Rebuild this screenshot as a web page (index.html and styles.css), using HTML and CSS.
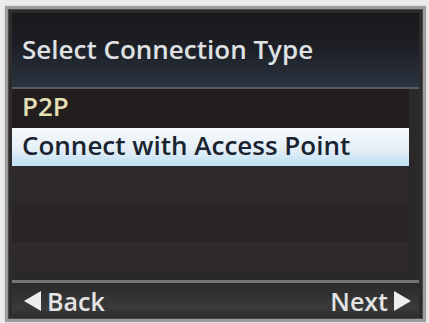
FILE: index.html
```html
<!DOCTYPE html>
<html>
<head>
<meta charset="utf-8">
<link rel="stylesheet" href="styles.css">
</head>
<body>
<div class="frame">
  <div class="screen">
    <div class="title">Select Connection Type</div>
    <div class="list">
      <div class="row p2p">P2P</div>
      <div class="row sel">Connect with Access Point</div>
      <div class="row empty"></div>
      <div class="row empty alt"></div>
      <div class="row empty"></div>
    </div>
    <div class="footer">
      <div class="btn"><span class="tri left"></span>Back</div>
      <div class="btn">Next<span class="tri right"></span></div>
    </div>
  </div>
</div>
</body>
</html>
```
FILE: styles.css
```css
html, body { margin: 0; padding: 0; background: #ececec; }
body { width: 429px; height: 323px; overflow: hidden; padding: 6px 3px 1px 5px; box-sizing: border-box; }
.frame {
  width: 421px; height: 316px; box-sizing: border-box;
  border: 3px solid #9c9c9c;
  box-shadow: inset 0 0 0 1px #4a4a4a, 0 0 2px #c8c8c8;
  padding: 4px 4px 1px 4px;
  background: #2e2b2c;
  font-family: "Open Sans", "Noto Sans", sans-serif;
  font-weight: 600;
}
.screen { display: flex; flex-direction: column; height: 100%; }
.title {
  height: 77px; box-sizing: border-box;
  padding: 21px 0 0 10px;
  font-size: 26px; line-height: 30px; color: #dfe0e2;
  background: linear-gradient(180deg, #18181b 0%, #1e2027 50%, #2b3441 100%);
  border-bottom: 2px solid #5c5c5e;
}
.list { display: flex; flex-direction: column; padding-right: 10px; background: #2b2829; }
.row { height: 38px; box-sizing: border-box; padding: 1px 0 0 10px; font-size: 26px; line-height: 32px; }
.p2p { height: 39px; color: #e2dfb4; background: #221e1e; }
.sel {
  color: #1a2430;
  background: linear-gradient(180deg, #f7fafc 0%, #e4eff6 55%, #bfe0f4 100%);
}
.empty { background: linear-gradient(180deg, #2f2b2c, #2b2829); }
.empty.alt { background: linear-gradient(180deg, #2a2627, #282425); }
.footer {
  margin-top: auto;
  height: 38px; box-sizing: border-box;
  border-top: 3px solid #757575;
  background: linear-gradient(180deg, #2a2a2a, #3a3a3a 70%, #2c2c2c);
  display: flex; justify-content: space-between; align-items: center;
  padding: 0 8px 0 12px;
  font-size: 25px; color: #e4e4e4;
}
.btn { display: flex; align-items: center; gap: 6px; line-height: 30px; }
.tri { width: 0; height: 0; border-top: 10px solid transparent; border-bottom: 10px solid transparent; }
.tri.left { border-right: 17px solid #eeeeee; }
.tri.right { border-left: 17px solid #eeeeee; }
```
